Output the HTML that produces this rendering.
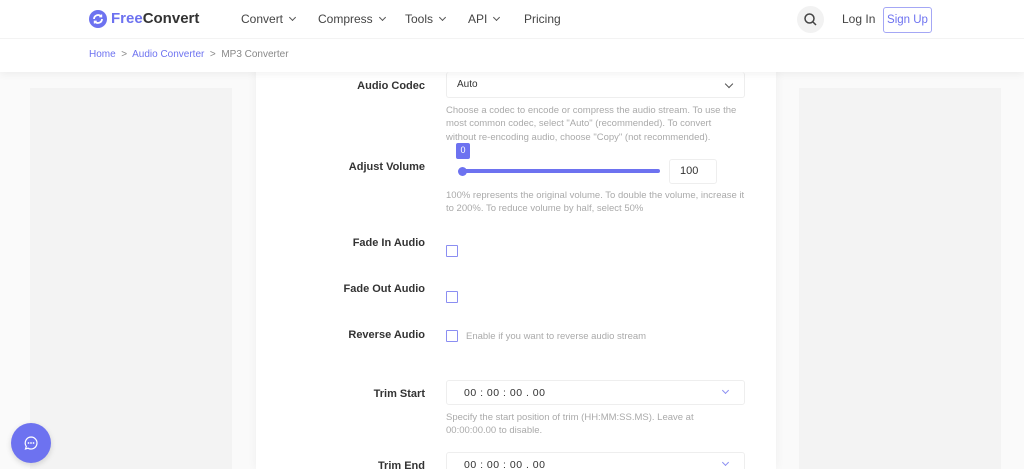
<!DOCTYPE html>
<html style="width:1024px;height:469px;overflow:hidden"><head><meta charset="utf-8"><style>
*{box-sizing:border-box;margin:0;padding:0}
body{width:1024px;height:469px;overflow:hidden;background:#fafafa;font-family:"Liberation Sans",sans-serif;position:relative;color:#333}
.hdr{position:absolute;left:0;top:0;width:1024px;height:72px;background:#fff;box-shadow:0 2px 8px rgba(0,0,0,.06);z-index:2}
.hdr .line{position:absolute;top:38px;left:0;right:0;border-top:1px solid #f3f3f3}
.a{position:absolute;white-space:nowrap}
.nav{font-size:12px;color:#444;top:12px}
.chev{display:inline-block;width:5px;height:5px;border-right:1.3px solid #555;border-bottom:1.3px solid #555;transform:rotate(45deg);margin-left:7px;position:relative;top:-3px}
.side{position:absolute;top:88px;width:202px;height:381px;background:#f3f3f3}
.card{position:absolute;left:256px;top:60px;width:520px;height:409px;background:#fff;box-shadow:0 0 10px rgba(0,0,0,.05)}
.lbl{position:absolute;right:599px;font-size:11px;font-weight:bold;color:#333;white-space:nowrap}
.help{position:absolute;left:446px;font-size:9.5px;color:#aaa;line-height:13.3px}
.sel{position:absolute;left:446px;width:299px;height:25px;border:1px solid #eee;border-radius:3px;background:#fff;font-size:10px}
.cb{position:absolute;left:446px;width:12px;height:12px;border:1.3px solid #8b8ef2;border-radius:1px}
</style></head><body>
<div class="side" style="left:30px"></div>
<div class="side" style="left:799px"></div>
<div class="card"></div>
<div class="hdr"><div class="line"></div>
<svg class="a" style="left:89px;top:10px" width="18" height="18" viewBox="0 0 18 18"><circle cx="9" cy="9" r="9" fill="#6d72f0"/><path d="M5 9a4 4 0 0 1 7-2.6M13 9a4 4 0 0 1-7 2.6" stroke="#fff" stroke-width="1.8" fill="none"/><path d="M12.5 4.5v2.2h-2.2M5.5 13.5v-2.2h2.2" stroke="#fff" stroke-width="1.4" fill="none"/></svg>
<div class="a" style="left:111px;top:10px;font-size:15px;font-weight:bold;color:#333"><span style="color:#6d72f0">Free</span>Convert</div>
<div class="a nav" style="left:241px">Convert<span class="chev"></span></div>
<div class="a nav" style="left:318px">Compress<span class="chev"></span></div>
<div class="a nav" style="left:405px">Tools<span class="chev"></span></div>
<div class="a nav" style="left:468px">API<span class="chev"></span></div>
<div class="a nav" style="left:524px">Pricing</div>
<div class="a" style="left:797px;top:6px;width:27px;height:27px;border-radius:50%;background:#f2f2f2"></div>
<svg class="a" style="left:803px;top:12px" width="15" height="15" viewBox="0 0 15 15"><circle cx="6.5" cy="6.5" r="4.5" stroke="#444" stroke-width="1.5" fill="none"/><path d="M10 10l3 3" stroke="#444" stroke-width="1.5"/></svg>
<div class="a nav" style="left:842px">Log In</div>
<div class="a" style="left:883px;top:7px;width:49px;height:26px;border:1px solid #a4a7f5;border-radius:3px;color:#6d72f0;font-size:11.5px;line-height:24px;text-align:center">Sign Up</div>
<div class="a" style="left:89px;top:49px;font-size:10px;color:#888"><span style="color:#6d72f0">Home</span> &nbsp;&gt;&nbsp; <span style="color:#6d72f0">Audio Converter</span> &nbsp;&gt;&nbsp; MP3 Converter</div>
</div>

<div class="sel" style="top:72px;height:26px;border-top:none"><span class="a" style="left:10px;top:7px">Auto</span><span class="chev" style="position:absolute;right:12px;top:9px;width:6px;height:6px;margin:0;border-color:#555"></span></div>
<div class="lbl" style="top:80px">Audio Codec</div>
<div class="help" style="top:104px">Choose a codec to encode or compress the audio stream. To use the<br>most common codec, select "Auto" (recommended). To convert<br>without re-encoding audio, choose "Copy" (not recommended).</div>

<div class="lbl" style="top:161px">Adjust Volume</div>
<div class="a" style="left:456px;top:143px;width:14px;height:16px;background:#6d72f0;border-radius:2px;color:#fff;font-size:9px;text-align:center;line-height:15px">0</div>
<div class="a" style="left:460px;top:169px;width:200px;height:4px;background:#6d72f0;border-radius:2px"></div>
<div class="a" style="left:458px;top:167px;width:9px;height:9px;background:#6d72f0;border-radius:50%"></div>
<div class="a" style="left:669px;top:159px;width:48px;height:25px;border:1px solid #eee;border-radius:3px;font-size:11px;line-height:23px;padding-left:10px;color:#333">100</div>
<div class="help" style="top:189px">100% represents the original volume. To double the volume, increase it<br>to 200%. To reduce volume by half, select 50%</div>

<div class="lbl" style="top:237px">Fade In Audio</div><div class="cb" style="top:245px"></div>
<div class="lbl" style="top:283px">Fade Out Audio</div><div class="cb" style="top:291px"></div>
<div class="lbl" style="top:329px">Reverse Audio</div><div class="cb" style="top:330px"></div>
<div class="help" style="top:330px;left:466px">Enable if you want to reverse audio stream</div>

<div class="sel" style="top:380px"><span class="a" style="left:17px;top:6px;font-size:10.5px;color:#333;letter-spacing:.5px">00 : 00 : 00 . 00</span><span class="chev" style="position:absolute;right:16px;top:7px;width:5px;height:5px;margin:0;border-color:#8b8ef2"></span></div>
<div class="lbl" style="top:388px">Trim Start</div>
<div class="help" style="top:411px">Specify the start position of trim (HH:MM:SS.MS). Leave at<br>00:00:00.00 to disable.</div>

<div class="sel" style="top:452px"><span class="a" style="left:17px;top:6px;font-size:10.5px;color:#333;letter-spacing:.5px">00 : 00 : 00 . 00</span><span class="chev" style="position:absolute;right:16px;top:7px;width:5px;height:5px;margin:0;border-color:#8b8ef2"></span></div>
<div class="lbl" style="top:460px">Trim End</div>

<div class="a" style="left:11px;top:423px;width:40px;height:40px;border-radius:50%;background:#6d72f0;box-shadow:0 2px 6px rgba(0,0,0,.15)"></div>
<svg class="a" style="left:23px;top:435px" width="16" height="16" viewBox="0 0 16 16"><path d="M8 2a6 6 0 1 1-3 11.2L2.5 14l.8-2.6A6 6 0 0 1 8 2z" stroke="#fff" stroke-width="1.2" fill="none"/><circle cx="5.5" cy="8" r=".9" fill="#fff"/><circle cx="8" cy="8" r=".9" fill="#fff"/><circle cx="10.5" cy="8" r=".9" fill="#fff"/></svg>
</body></html>
